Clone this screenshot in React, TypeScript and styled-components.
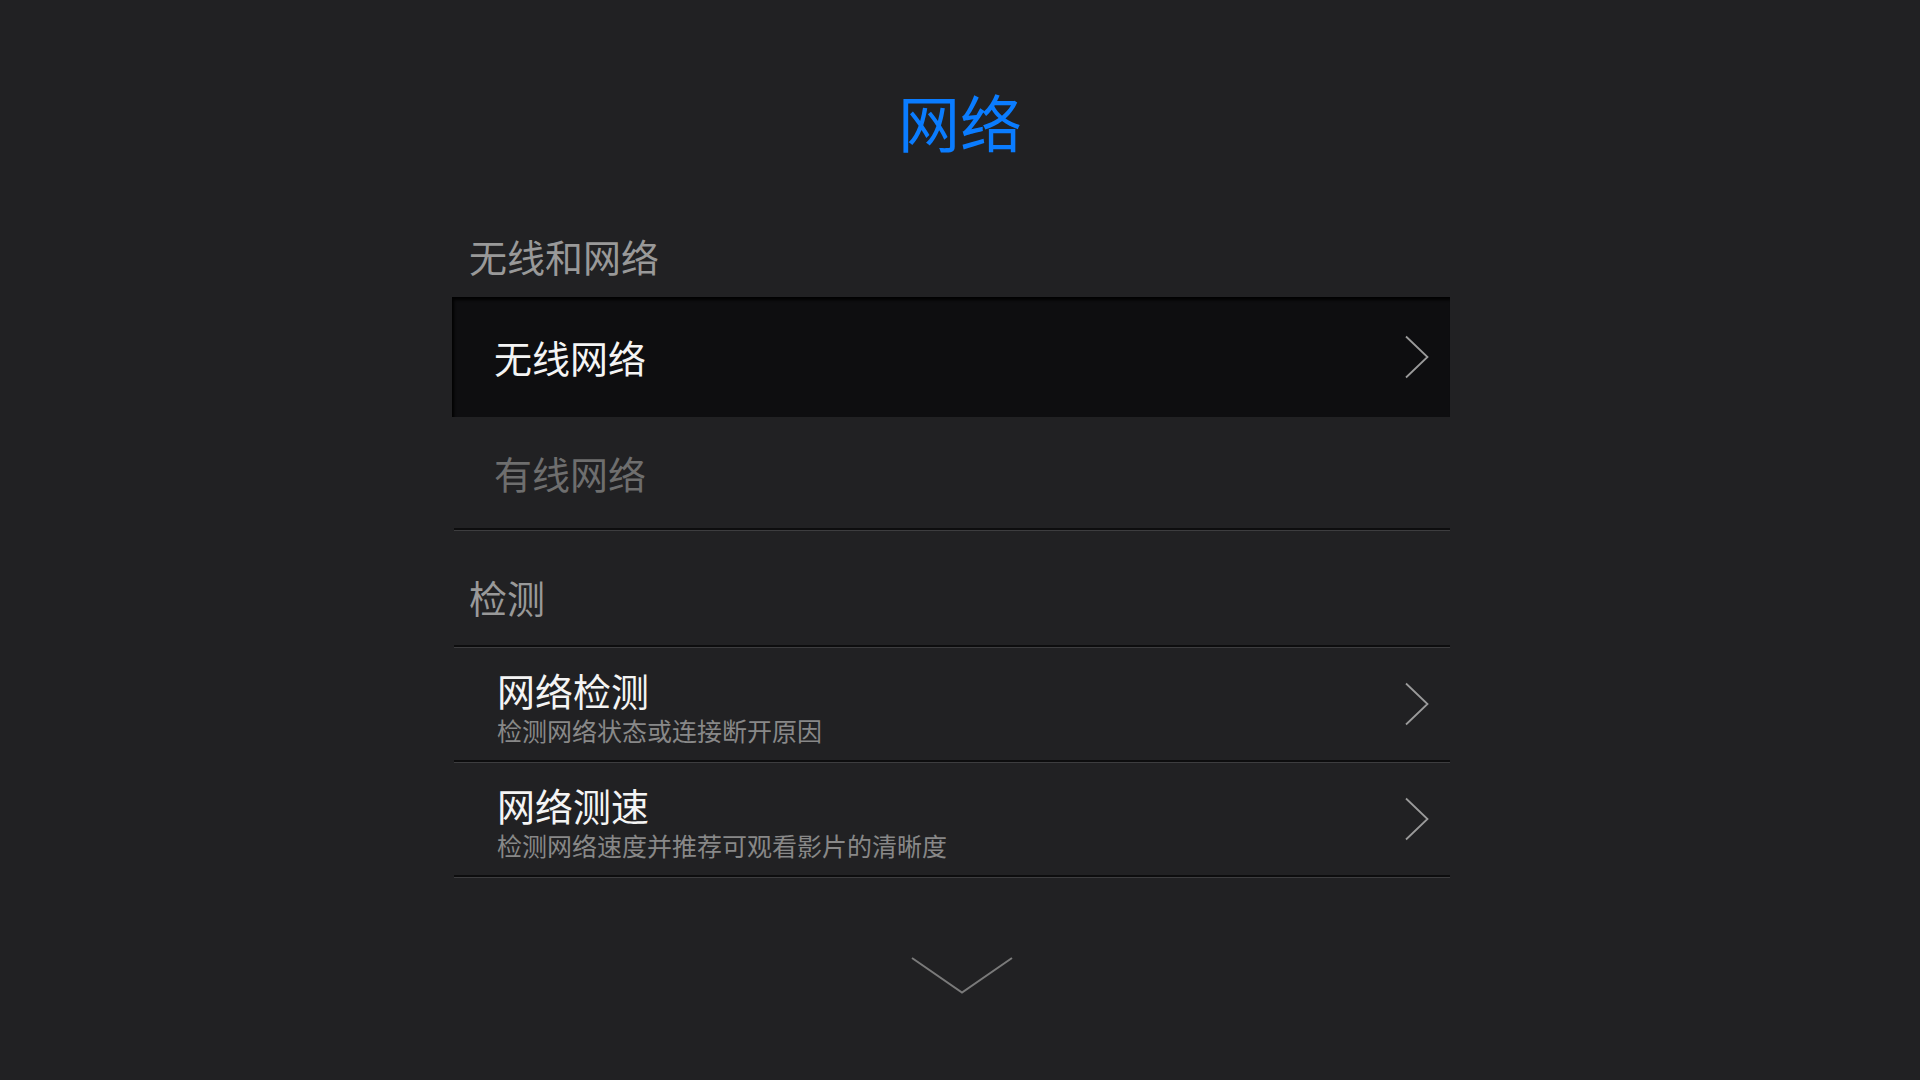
import React from 'react'
import styled, { createGlobalStyle } from 'styled-components'

const GlobalStyle = createGlobalStyle`
    html, body {
        margin: 0;
        padding: 0;
        background: #212123;
    }
    body {
        font-family: 'Noto Sans CJK SC', 'Noto Sans', sans-serif;
    }
`

const Page = styled.div`
    min-height: 100vh;
    background: #212123;
    display: flex;
    flex-direction: column;
    align-items: center;
`

const Title = styled.h1`
    margin: 0;
    padding-top: 90px;
    font-size: 62px;
    line-height: 62px;
    font-weight: 400;
    color: #0a7cff;
    letter-spacing: 0;
`

const List = styled.div`
    width: 998px;
    align-self: flex-start;
    margin-left: calc(50% - 508px);
    display: flex;
    flex-direction: column;
`

const SectionTitle = styled.div<{ $top: number; $bottom: number }>`
    padding: ${(p) => p.$top}px 0 ${(p) => p.$bottom}px 17px;
    font-size: 38px;
    line-height: 38px;
    font-weight: 400;
    color: #999999;
`

const Row = styled.div<{ $selected?: boolean; $height: number }>`
    height: ${(p) => p.$height}px;
    box-sizing: border-box;
    display: flex;
    align-items: center;
    justify-content: space-between;
    padding: 0 21px 0 42px;
    background: ${(p) => (p.$selected ? '#0e0e10' : 'transparent')};
    box-shadow: ${(p) =>
        p.$selected ? 'inset 2px 3px 3px rgba(0, 0, 0, 0.9)' : 'none'};
`

const RowLabel = styled.span<{ $dim?: boolean }>`
    font-size: 38px;
    line-height: 38px;
    font-weight: 400;
    color: ${(p) => (p.$dim ? '#6e6e6e' : '#f4f4f4')};
`

const DetailRow = styled.div`
    box-sizing: border-box;
    height: 112px;
    display: flex;
    align-items: center;
    justify-content: space-between;
    padding: 0 21px 0 45px;
`

const DetailText = styled.div`
    display: flex;
    flex-direction: column;
    gap: 9px;
    padding-top: 6px;
`

const DetailTitle = styled.span`
    font-size: 38px;
    line-height: 38px;
    font-weight: 400;
    color: #f4f4f4;
`

const DetailSub = styled.span`
    font-size: 25px;
    line-height: 25px;
    font-weight: 400;
    color: #888888;
`

const Divider = styled.div`
    height: 2px;
    margin-left: 2px;
    background: #0d0d0e;
    border-bottom: 1px solid #3d3d3f;
`

const MoreArrow = styled.div`
    margin-top: 79px;
    margin-left: 4px;
    width: 102px;
    height: 37px;
    display: flex;
    justify-content: center;
`

const Chevron: React.FC = () => (
    <svg width="24" height="44" viewBox="0 0 24 44" fill="none">
        <polyline
            points="1,1.5 22.5,22 1,42.5"
            stroke="#9a9a9a"
            strokeWidth="1.8"
            fill="none"
        />
    </svg>
)

const App: React.FC = () => {
    return (
        <Page>
            <GlobalStyle />
            <Title>网络</Title>
            <List>
                <SectionTitle $top={85} $bottom={22}>
                    无线和网络
                </SectionTitle>
                <Row $selected $height={120}>
                    <RowLabel>无线网络</RowLabel>
                    <Chevron />
                </Row>
                <Row $height={111}>
                    <RowLabel $dim>有线网络</RowLabel>
                </Row>
                <Divider />
                <SectionTitle $top={47} $bottom={29}>
                    检测
                </SectionTitle>
                <Divider />
                <DetailRow>
                    <DetailText>
                        <DetailTitle>网络检测</DetailTitle>
                        <DetailSub>检测网络状态或连接断开原因</DetailSub>
                    </DetailText>
                    <Chevron />
                </DetailRow>
                <Divider />
                <DetailRow>
                    <DetailText>
                        <DetailTitle>网络测速</DetailTitle>
                        <DetailSub>检测网络速度并推荐可观看影片的清晰度</DetailSub>
                    </DetailText>
                    <Chevron />
                </DetailRow>
                <Divider />
            </List>
            <MoreArrow>
                <svg width="102" height="37" viewBox="0 0 102 37" fill="none">
                    <polyline
                        points="1,1 51,35.5 101,1"
                        stroke="#7a7a7a"
                        strokeWidth="2"
                        fill="none"
                    />
                </svg>
            </MoreArrow>
        </Page>
    )
}

export default App
